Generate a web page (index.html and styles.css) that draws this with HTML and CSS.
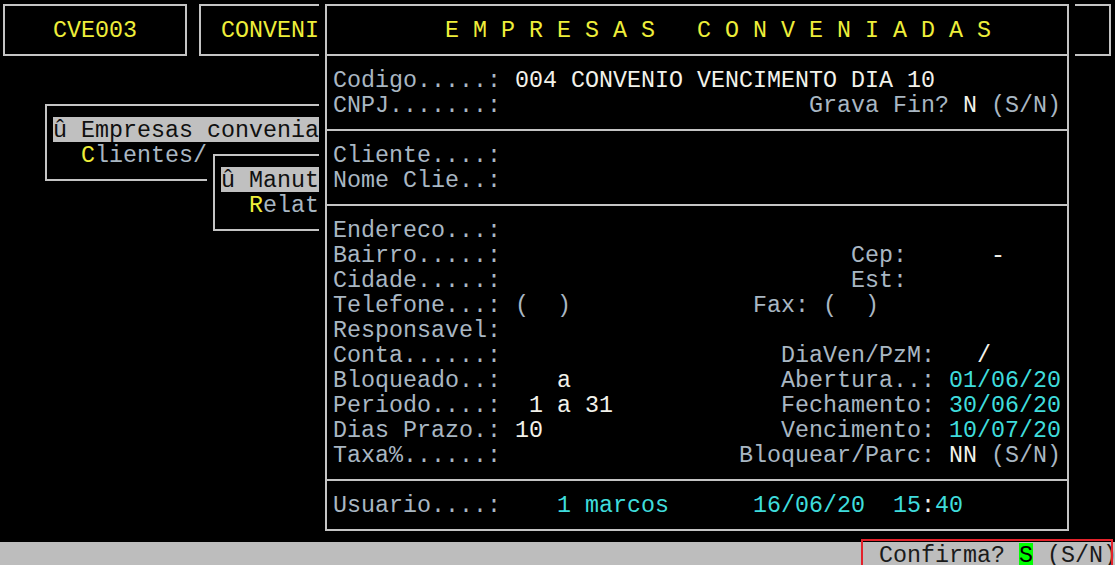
FILE: index.html
```html
<!DOCTYPE html>
<html lang="pt">
<head>
<meta charset="utf-8">
<title>CVE003 - Empresas Conveniadas</title>
<link rel="stylesheet" href="styles.css">
</head>
<body>
<div class="screen">
  <div class="desktop">
    <div class="win w-code">
      <div class="row">   <span class="y">CVE003</span></div>
    </div>
    <div class="win w-prog">
      <div class="row"> <span class="y">CONVENIOS</span></div>
    </div>
    <div class="win w-menu1">
      <div class="row sel">û Empresas conveniadas</div>
      <div class="row">  <span class="y">C</span>lientes/Convenio</div>
    </div>
    <div class="win w-menu2">
      <div class="row sel">û Manutencao</div>
      <div class="row">  <span class="y">R</span>elatorios</div>
    </div>
    <div class="win w-main">
      <div class="row title">        E M P R E S A S   C O N V E N I A D A S</div>
      <div class="divider"></div>
      <div class="row">Codigo.....: <span class="v">004 CONVENIO VENCIMENTO DIA 10</span></div>
      <div class="row">CNPJ.......:                      Grava Fin? <span class="v">N</span> (S/N)</div>
      <div class="divider"></div>
      <div class="row">Cliente....:</div>
      <div class="row">Nome Clie..:</div>
      <div class="divider"></div>
      <div class="row">Endereco...:</div>
      <div class="row">Bairro.....:                         Cep:      <span class="v">-</span></div>
      <div class="row">Cidade.....:                         Est:</div>
      <div class="row">Telefone...: (  )             Fax: (  )</div>
      <div class="row">Responsavel:</div>
      <div class="row">Conta......:                    DiaVen/PzM:   <span class="v">/</span></div>
      <div class="row">Bloqueado..:    <span class="v">a</span>               Abertura..: <span class="c">01/06/20</span></div>
      <div class="row">Periodo....:  <span class="v">1 a 31</span>            Fechamento: <span class="c">30/06/20</span></div>
      <div class="row">Dias Prazo.: <span class="v">10</span>                 Vencimento: <span class="c">10/07/20</span></div>
      <div class="row">Taxa%......:                 Bloquear/Parc: <span class="v">NN</span> (S/N)</div>
      <div class="divider"></div>
      <div class="row">Usuario....:    <span class="c">1 marcos</span>      <span class="c">16/06/20</span>  <span class="c">15</span><span class="v">:</span><span class="c">40</span></div>
    </div>
  </div>
  <div class="status">
    <div class="row">Confirma? <span class="ok">S</span> (S/N)</div>
    <div class="mark"></div>
  </div>
</div>
</body>
</html>
```
FILE: styles.css
```css
:root {
  --cw: 14px;
  --rh: 25px;
  --line: #c4c4c4;
}
html, body {
  margin: 0;
  padding: 0;
  background: #000;
  width: 1115px;
  height: 565px;
  overflow: hidden;
}
.screen {
  position: relative;
  left: -3px;
  top: -8px;
  width: 1125px;
  display: flex;
  flex-direction: column;
  font-family: "Courier New", "Nimbus Mono PS", "FreeMono", "Liberation Mono", monospace;
  font-size: 23.333px;
  line-height: var(--rh);
  color: #a9b7c3;
}
.desktop {
  position: relative;
  height: calc(22 * var(--rh));
}
.row {
  height: var(--rh);
  padding-top: 2px;
  box-sizing: border-box;
  white-space: pre;
}
.y { color: #eeee3a; }
.v { color: #f2f2ea; }
.c { color: #3fdcdc; }

.win {
  position: absolute;
  background: #000;
  padding: var(--rh) var(--cw);
  box-sizing: border-box;
  overflow: hidden;
}
.win::before {
  content: "";
  position: absolute;
  top: 12px;
  bottom: 11px;
  left: 6px;
  right: 6px;
  border: 2px solid var(--line);
  pointer-events: none;
}
.w-code {
  left: 0;
  top: 0;
  width: calc(14 * var(--cw));
  height: calc(3 * var(--rh));
}
.w-prog {
  left: calc(14 * var(--cw));
  top: 0;
  width: calc(66 * var(--cw));
  height: calc(3 * var(--rh));
}
.w-menu1 {
  left: calc(3 * var(--cw));
  top: calc(4 * var(--rh));
  width: calc(26 * var(--cw));
  height: calc(4 * var(--rh));
}
.w-menu2 {
  left: calc(15 * var(--cw));
  top: calc(6 * var(--rh));
  width: calc(16 * var(--cw));
  height: calc(4 * var(--rh));
}
.sel {
  background: #c0c0c0;
  color: #101010;
}
.w-main {
  left: calc(23 * var(--cw));
  top: 0;
  width: calc(54 * var(--cw));
  height: calc(22 * var(--rh));
}
.title { color: #eeee3a; }
.divider {
  height: var(--rh);
  position: relative;
  margin: 0 -8px;
}
.divider::before {
  content: "";
  position: absolute;
  left: 0;
  right: 0;
  top: 12px;
  height: 2px;
  background: var(--line);
}
.status {
  position: relative;
  height: var(--rh);
  background: #bdbdbd;
  color: #1a1a1a;
  padding-left: calc(63 * var(--cw));
}
.ok {
  background: #00ff00;
  color: #000;
}
.mark {
  position: absolute;
  left: 864px;
  top: -3px;
  width: 252px;
  height: 28px;
  border: 2px solid #e3222b;
  box-sizing: border-box;
}
```
